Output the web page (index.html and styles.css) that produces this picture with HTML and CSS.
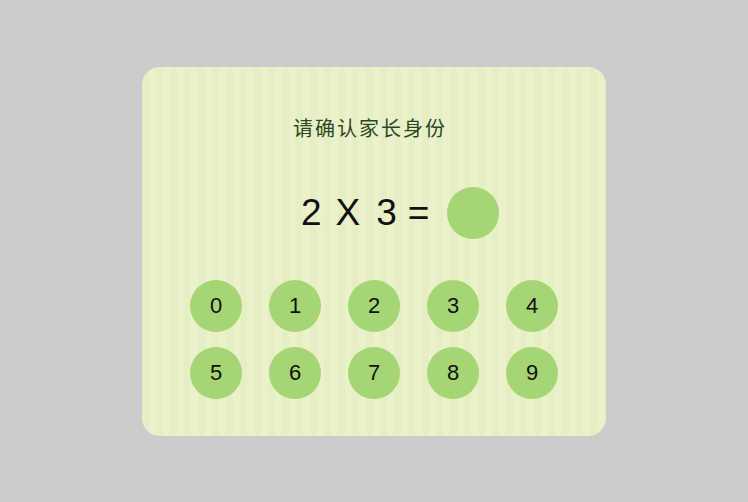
FILE: index.html
```html
<!DOCTYPE html>
<html lang="zh">
<head>
<meta charset="utf-8">
<link rel="stylesheet" href="styles.css">
</head>
<body>
<div class="page">
  <div class="card">
    <div class="title">请确认家长身份</div>
    <div class="equation">
      <span class="t t2">2</span>
      <span class="t tx">X</span>
      <span class="t t3">3</span>
      <span class="t teq">=</span>
      <span class="answer"></span>
    </div>
    <div class="keypad">
      <button class="key">0</button>
      <button class="key">1</button>
      <button class="key">2</button>
      <button class="key">3</button>
      <button class="key">4</button>
      <button class="key">5</button>
      <button class="key">6</button>
      <button class="key">7</button>
      <button class="key">8</button>
      <button class="key">9</button>
    </div>
  </div>
</div>
</body>
</html>
```
FILE: styles.css
```css
html, body {
  margin: 0;
  padding: 0;
  background: #cccccc;
}
.page {
  width: 748px;
  height: 502px;
  display: flex;
  align-items: center;
  justify-content: center;
}
.card {
  box-sizing: border-box;
  width: 464px;
  height: 369px;
  border-radius: 18px;
  background: repeating-linear-gradient(90deg, #e6eec3 0 7px, #ebf2cb 7px 14px);
  padding-top: 49px;
  display: flex;
  flex-direction: column;
  align-items: center;
  font-family: "Liberation Sans", Arial, sans-serif;
}
.title {
  font-family: "Noto Sans CJK SC", sans-serif;
  font-size: 20px;
  line-height: 24px;
  letter-spacing: 2px;
  margin-right: 8px;
  color: #2b4720;
}
.equation {
  margin-top: 47px;
  align-self: stretch;
  display: flex;
  align-items: center;
  padding-left: 159px;
  height: 52px;
}
.t {
  font-size: 37px;
  line-height: 52px;
  color: #111;
}
.t2 { margin-right: 14px; }
.tx { margin-right: 16px; }
.t3 { margin-right: 11px; }
.teq { margin-right: 18px; }
.answer {
  width: 52px;
  height: 52px;
  border-radius: 50%;
  background: #a6d574;
}
.keypad {
  margin-top: 41px;
  display: grid;
  grid-template-columns: repeat(5, 52px);
  grid-auto-rows: 52px;
  column-gap: 27px;
  row-gap: 15px;
}
.key {
  width: 52px;
  height: 52px;
  border: none;
  padding: 0;
  border-radius: 50%;
  background: #a6d574;
  font-family: "Liberation Sans", Arial, sans-serif;
  font-size: 22px;
  color: #111;
  display: flex;
  align-items: center;
  justify-content: center;
}
```
